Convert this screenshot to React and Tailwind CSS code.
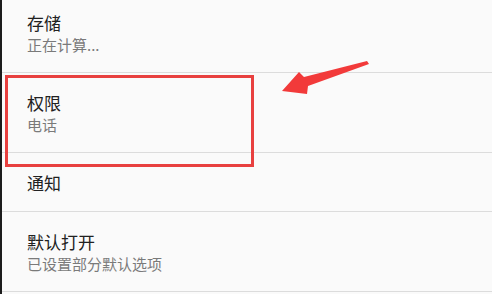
import React from "react";

const rows = [
  { title: "存储", sub: "正在计算..." },
  { title: "权限", sub: "电话" },
  { title: "通知" },
  { title: "默认打开", sub: "已设置部分默认选项" },
];

const App = () => {
  return (
    <div
      className="relative w-[492px] h-[294px] overflow-hidden bg-[#fafafa] border-l-2 border-[#1c1c1c]"
      style={{ fontFamily: '"Noto Sans CJK SC", "Noto Sans", sans-serif' }}
    >
      <ul className="-mt-[7px]">
        {rows.map((row, index) => (
          <li key={index} className="pl-[25px] pt-[19px] pb-[17px] border-b border-[#dcdcdc]">
            <div className="text-[17px] leading-[22px] text-[#212121]">{row.title}</div>
            {row.sub && (
              <div className="mt-px text-[15px] leading-[20px] text-[#7a7a7a]">{row.sub}</div>
            )}
          </li>
        ))}
      </ul>

      {/* annotation: highlight box */}
      <div className="absolute left-[3px] top-[75px] w-[249px] h-[92px] border-[3px] border-[#e8403f]" />

      {/* annotation: arrow */}
      <svg className="absolute left-0 top-0" width="492" height="294" viewBox="0 0 492 294">
        <polygon
          points="365,61 367,64 306,86 305,94 280,91 297,72 302,77"
          fill="#f23a3a"
        />
      </svg>
    </div>
  );
};

export default App;
